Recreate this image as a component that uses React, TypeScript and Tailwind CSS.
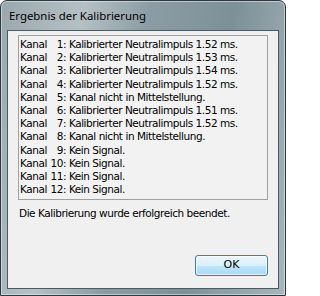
const lines: [string, string][] = [
  ["1", "Kalibrierter Neutralimpuls 1.52 ms."],
  ["2", "Kalibrierter Neutralimpuls 1.53 ms."],
  ["3", "Kalibrierter Neutralimpuls 1.54 ms."],
  ["4", "Kalibrierter Neutralimpuls 1.52 ms."],
  ["5", "Kanal nicht in Mittelstellung."],
  ["6", "Kalibrierter Neutralimpuls 1.51 ms."],
  ["7", "Kalibrierter Neutralimpuls 1.52 ms."],
  ["8", "Kanal nicht in Mittelstellung."],
  ["9", "Kein Signal."],
  ["10", "Kein Signal."],
  ["11", "Kein Signal."],
  ["12", "Kein Signal."],
];

export default function App() {
  return (
    <div className="w-[286px] h-[296px] bg-white">
      <div className="w-[286px] h-[296px] rounded-t-[7px] border border-[#2a3a40] bg-[linear-gradient(100deg,#9aa8ae_0%,#b4c0c4_25%,#8c9ca4_45%,#7d9098_70%,#a9b6bb_100%)] flex flex-col px-[6px] pb-[6px] shadow-[inset_0_0_0_1px_rgba(255,255,255,0.45)]">
        <div className="h-[29px] flex items-center pl-[2px] text-[11.4px] text-black font-['Noto_Sans',sans-serif]">
          Ergebnis der Kalibrierung
        </div>
        <div className="flex-1 border border-[#4a5a60] bg-[#f0f0f0] flex flex-col px-[10px] pt-[4px] pb-[11px] font-['DejaVu_Sans',sans-serif] text-[10.5px] tracking-[-0.45px] text-black">
          <div className="border border-[#a0a0a0] bg-[#f2f2f2] pl-[1px] pt-[2px] pb-[3px] leading-[13.2px]">
            {lines.map(([n, t]) => (
              <div key={n} className="flex whitespace-pre">
                <span>Kanal</span>
                <span className="w-[16px] text-right">{n}</span>
                <span>: {t}</span>
              </div>
            ))}
          </div>
          <div className="mt-[6px] pl-[1px]">Die Kalibrierung wurde erfolgreich beendet.</div>
          <div className="flex-1" />
          <div className="flex justify-end">
            <button className="w-[73px] h-[21px] mb-[1px] rounded-[3px] border border-[#3c7fb1] bg-[linear-gradient(#eaf6fd_0%,#d9f0fc_50%,#bee6fd_51%,#a7d9f5_100%)] shadow-[inset_0_0_0_1px_rgba(255,255,255,0.7)] text-[11px] tracking-normal text-black">
              OK
            </button>
          </div>
        </div>
      </div>
    </div>
  );
}
